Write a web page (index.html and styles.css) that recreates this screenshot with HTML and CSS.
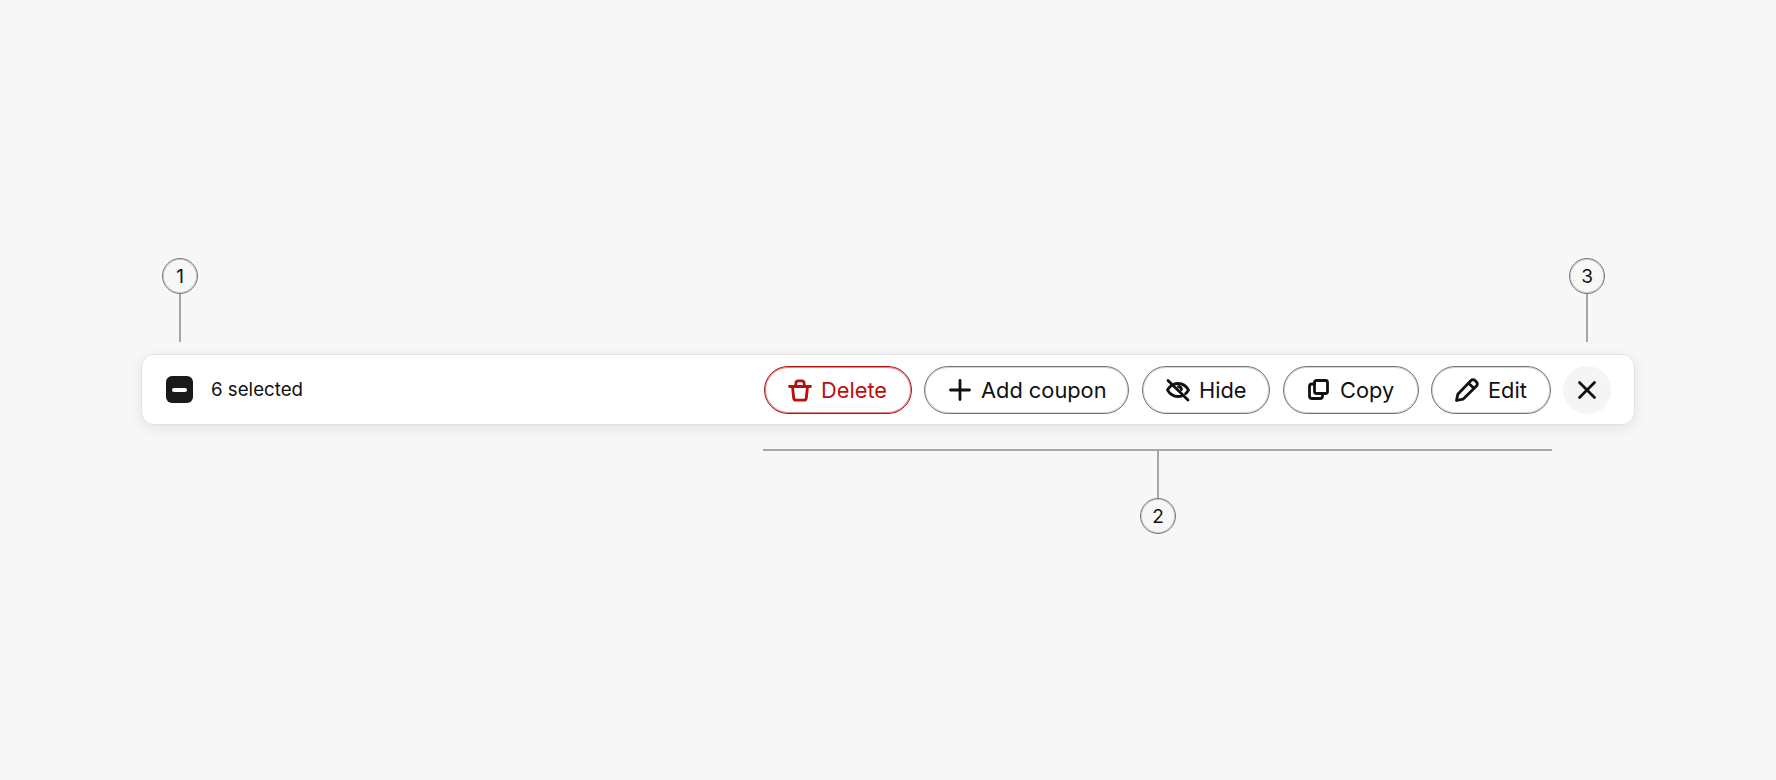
FILE: index.html
```html
<!DOCTYPE html>
<html lang="en">
<head>
    <meta charset="UTF-8">
    <title>Bulk action bar</title>
    <link rel="stylesheet" href="styles.css">
</head>
<body>
    <div class="bar-wrap">
        <!-- Callouts -->
        <div class="callout callout-one"><span class="callout-num">1</span><span class="callout-line"></span></div>
        <div class="callout callout-three"><span class="callout-num">3</span><span class="callout-line"></span></div>
        <div class="bracket"></div>
        <div class="callout callout-two"><span class="callout-line"></span><span class="callout-num">2</span></div>

        <div class="action-bar">
            <div class="selection">
                <span class="checkbox"><span class="checkbox-dash"></span></span>
                <span class="selection-text">6 selected</span>
            </div>
            <div class="actions">
                <button class="btn btn-danger">
                    <svg class="icon" viewBox="0 0 28 28"><path d="M3.500 10.500h21M6.500 10.500l1.200 11.500a2.500 2.500 0 0 0 2.500 2.200h7.600a2.500 2.500 0 0 0 2.500-2.200l1.200-11.500M9.500 10.500l.5-4a2 2 0 0 1 2-1.700h4a2 2 0 0 1 2 1.700l.5 4"/></svg>
                    Delete
                </button>
                <button class="btn btn-add">
                    <svg class="icon" viewBox="0 0 28 28"><path d="M14 4.500v19M4.500 14h19"/></svg>
                    Add coupon
                </button>
                <button class="btn btn-hide">
                    <svg class="icon" viewBox="0 0 28 28"><path d="M10.500 7.900c1.100-.3 2.300-.4 3.500-.4 5 0 8.500 3 10.500 6.500-.7 1.300-1.700 2.500-2.900 3.600M18 20c-1.300.4-2.600.5-4 .5-5 0-8.500-3-10.500-6.500.8-1.500 2-2.900 3.500-4.100M4 4.500L24 24M14.500 10.500a3.500 3.500 0 0 1 3 3"/></svg>
                    Hide
                </button>
                <button class="btn btn-copy">
                    <svg class="icon" viewBox="0 0 28 28"><rect x="9.500" y="4.500" width="13" height="13" rx="2"/><path d="M9.500 8H7a2.500 2.500 0 0 0-2.500 2.500V20A2.500 2.500 0 0 0 7 22.500h8a2.500 2.500 0 0 0 2.500-2.500v-2.500"/></svg>
                    Copy
                </button>
                <button class="btn btn-edit">
                    <svg class="icon" viewBox="0 0 28 28"><path d="M3.500 24.500l1.300-6.300L18 4.500a2.800 2.800 0 0 1 4 0L23.500 6a2.800 2.800 0 0 1 0 4L10 23.200 3.500 24.500zM15.500 7l5.500 5.500"/></svg>
                    Edit
                </button>
                <button class="btn-close">
                    <svg class="icon" viewBox="0 0 28 28"><path d="M6.500 6.500l15 15M21.500 6.500l-15 15"/></svg>
                </button>
            </div>
        </div>
    </div>
</body>
</html>
```

FILE: styles.css
```css
html, body {
    margin: 0;
    padding: 0;
    height: 100%;
    overflow: hidden;
}

body {
    background: #f7f7f7;
    color: #111;
    font-family: "Inter", "Liberation Sans", sans-serif;
    padding: 354px 141px 0;
    box-sizing: border-box;
}

.bar-wrap {
    position: relative;
    width: 1494px;
}

/* Main bar */
.action-bar {
    height: 71px;
    box-sizing: border-box;
    background: #fff;
    border: 1px solid #e2e2e2;
    border-radius: 13px;
    box-shadow: 0 4px 14px rgba(0, 0, 0, 0.08);
    padding: 0 23px 0 24px;
    display: flex;
    align-items: center;
    justify-content: space-between;
}

.selection {
    display: flex;
    align-items: center;
    gap: 18px;
}

.checkbox {
    width: 27px;
    height: 27px;
    border-radius: 6px;
    background: #1a1a1a;
    display: flex;
    align-items: center;
    justify-content: center;
}

.checkbox-dash {
    width: 15px;
    height: 4px;
    border-radius: 2px;
    background: #fff;
}

.selection-text {
    font-size: 18.700px;
}

.actions {
    display: flex;
    align-items: center;
    gap: 12px;
}

.btn {
    height: 48px;
    box-sizing: border-box;
    background: #fff;
    border: 1px solid #757575;
    box-shadow: inset 0 0 0 1px rgba(117, 117, 117, 0.3);
    border-radius: 24px;
    padding: 0 0 0 21px;
    display: flex;
    align-items: center;
    gap: 7px;
    font-family: inherit;
    font-size: 21.800px;
    color: #111;
}

.btn-danger {
    width: 148px;
    border-color: #b80f0f;
    box-shadow: inset 0 0 0 1px rgba(184, 15, 15, 0.5);
    color: #b80f0f;
}

.btn-add { width: 205px; }
.btn-hide { width: 128px; margin-left: 1px; }
.btn-copy { width: 136px; margin-left: 1px; }
.btn-edit { width: 120px; }

.btn-close {
    width: 48px;
    height: 48px;
    border: 0;
    border-radius: 50%;
    background: #f5f5f5;
    padding: 0;
    display: flex;
    align-items: center;
    justify-content: center;
    color: #111;
}

.icon {
    width: 28px;
    height: 28px;
    flex: none;
    fill: none;
    stroke: currentColor;
    stroke-width: 2.800;
    stroke-linecap: round;
    stroke-linejoin: round;
}

/* Callouts over the bar */
.callout {
    position: absolute;
    display: flex;
    flex-direction: column;
    align-items: center;
    width: 36px;
}

.callout-one { left: 21px; top: -96px; }
.callout-three { left: 1428px; top: -96px; }
.callout-two { left: 999px; top: 96px; }

.callout-num {
    width: 36px;
    height: 36px;
    box-sizing: border-box;
    border: 1px solid #757575;
    box-shadow: inset 0 0 0 1px rgba(117, 117, 117, 0.3);
    border-radius: 50%;
    display: flex;
    align-items: center;
    justify-content: center;
    font-size: 19px;
    color: #111;
}

.callout-line {
    width: 2px;
    height: 48px;
    background: #a6a6a6;
}

.bracket {
    position: absolute;
    left: 622px;
    top: 95px;
    width: 789px;
    height: 2px;
    background: #a6a6a6;
}
```
